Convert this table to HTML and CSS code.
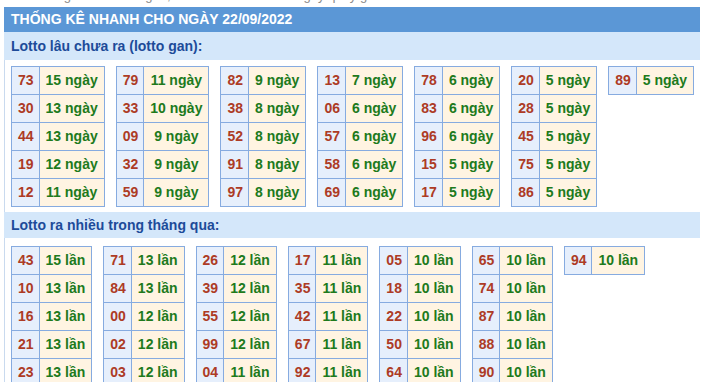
FILE: index.html
```html
<!DOCTYPE html>
<html lang="vi">
<head>
<meta charset="utf-8">
<title>Thống kê nhanh</title>
<link rel="stylesheet" href="styles.css">
</head>
<body>
<div class="topline"><div class="topline-text">Xem thống kê nhanh lô gan, lô ra nhiều nhất theo ngày quay gần nhất</div></div>
<div class="box">
  <div class="head">THỐNG KÊ NHANH CHO NGÀY 22/09/2022</div>
  <div class="body">
    <div class="band">Lotto lâu chưa ra (lotto gan):</div>
    <div class="grid">
      <table class="t"><tr><td class="n">73</td><td class="v">15 ngày</td></tr><tr><td class="n">30</td><td class="v">13 ngày</td></tr><tr><td class="n">44</td><td class="v">13 ngày</td></tr><tr><td class="n">19</td><td class="v">12 ngày</td></tr><tr><td class="n">12</td><td class="v">11 ngày</td></tr></table>
      <table class="t"><tr><td class="n">79</td><td class="v">11 ngày</td></tr><tr><td class="n">33</td><td class="v">10 ngày</td></tr><tr><td class="n">09</td><td class="v">9 ngày</td></tr><tr><td class="n">32</td><td class="v">9 ngày</td></tr><tr><td class="n">59</td><td class="v">9 ngày</td></tr></table>
      <table class="t"><tr><td class="n">82</td><td class="v">9 ngày</td></tr><tr><td class="n">38</td><td class="v">8 ngày</td></tr><tr><td class="n">52</td><td class="v">8 ngày</td></tr><tr><td class="n">91</td><td class="v">8 ngày</td></tr><tr><td class="n">97</td><td class="v">8 ngày</td></tr></table>
      <table class="t"><tr><td class="n">13</td><td class="v">7 ngày</td></tr><tr><td class="n">06</td><td class="v">6 ngày</td></tr><tr><td class="n">57</td><td class="v">6 ngày</td></tr><tr><td class="n">58</td><td class="v">6 ngày</td></tr><tr><td class="n">69</td><td class="v">6 ngày</td></tr></table>
      <table class="t"><tr><td class="n">78</td><td class="v">6 ngày</td></tr><tr><td class="n">83</td><td class="v">6 ngày</td></tr><tr><td class="n">96</td><td class="v">6 ngày</td></tr><tr><td class="n">15</td><td class="v">5 ngày</td></tr><tr><td class="n">17</td><td class="v">5 ngày</td></tr></table>
      <table class="t"><tr><td class="n">20</td><td class="v">5 ngày</td></tr><tr><td class="n">28</td><td class="v">5 ngày</td></tr><tr><td class="n">45</td><td class="v">5 ngày</td></tr><tr><td class="n">75</td><td class="v">5 ngày</td></tr><tr><td class="n">86</td><td class="v">5 ngày</td></tr></table>
      <table class="t"><tr><td class="n">89</td><td class="v">5 ngày</td></tr></table>
    </div>
    <div class="band band2">Lotto ra nhiều trong tháng qua:</div>
    <div class="grid grid2">
      <table class="t"><tr><td class="n">43</td><td class="v">15 lần</td></tr><tr><td class="n">10</td><td class="v">13 lần</td></tr><tr><td class="n">16</td><td class="v">13 lần</td></tr><tr><td class="n">21</td><td class="v">13 lần</td></tr><tr><td class="n">23</td><td class="v">13 lần</td></tr></table>
      <table class="t"><tr><td class="n">71</td><td class="v">13 lần</td></tr><tr><td class="n">84</td><td class="v">13 lần</td></tr><tr><td class="n">00</td><td class="v">12 lần</td></tr><tr><td class="n">02</td><td class="v">12 lần</td></tr><tr><td class="n">03</td><td class="v">12 lần</td></tr></table>
      <table class="t"><tr><td class="n">26</td><td class="v">12 lần</td></tr><tr><td class="n">39</td><td class="v">12 lần</td></tr><tr><td class="n">55</td><td class="v">12 lần</td></tr><tr><td class="n">99</td><td class="v">12 lần</td></tr><tr><td class="n">04</td><td class="v">11 lần</td></tr></table>
      <table class="t"><tr><td class="n">17</td><td class="v">11 lần</td></tr><tr><td class="n">35</td><td class="v">11 lần</td></tr><tr><td class="n">42</td><td class="v">11 lần</td></tr><tr><td class="n">67</td><td class="v">11 lần</td></tr><tr><td class="n">92</td><td class="v">11 lần</td></tr></table>
      <table class="t"><tr><td class="n">05</td><td class="v">10 lần</td></tr><tr><td class="n">18</td><td class="v">10 lần</td></tr><tr><td class="n">22</td><td class="v">10 lần</td></tr><tr><td class="n">50</td><td class="v">10 lần</td></tr><tr><td class="n">64</td><td class="v">10 lần</td></tr></table>
      <table class="t"><tr><td class="n">65</td><td class="v">10 lần</td></tr><tr><td class="n">74</td><td class="v">10 lần</td></tr><tr><td class="n">87</td><td class="v">10 lần</td></tr><tr><td class="n">88</td><td class="v">10 lần</td></tr><tr><td class="n">90</td><td class="v">10 lần</td></tr></table>
      <table class="t"><tr><td class="n">94</td><td class="v">10 lần</td></tr></table>
    </div>
  </div>
</div>
</body>
</html>
```
FILE: styles.css
```css
html, body {
  margin: 0;
  padding: 0;
  background: #ffffff;
  font-family: "Liberation Sans", Arial, sans-serif;
}

.topline {
  height: 4px;
  overflow: hidden;
  margin-left: 8px;
}

.topline-text {
  margin-top: -12px;
  font-size: 13px;
  line-height: 16px;
  color: #8a8a8a;
  white-space: nowrap;
}

.box {
  margin: 3px 0 0 4px;
  width: 696px;
  height: 375px;
  overflow: hidden;
}

.head {
  height: 25px;
  line-height: 25px;
  background: #5b97d6;
  color: #ffffff;
  font-size: 14px;
  font-weight: bold;
  padding-left: 7px;
}

.body {
  border-left: 1px solid #c9daef;
  height: 350px;
}

.band {
  margin-left: -1px;
  height: 28px;
  line-height: 28px;
  background: #d4e7fa;
  color: #1d4b99;
  font-size: 14px;
  font-weight: bold;
  padding-left: 7px;
}

.band2 {
  margin-top: 5px;
  height: 26px;
  line-height: 26px;
}

.grid {
  display: flex;
  align-items: flex-start;
  gap: 11px;
  padding: 6px 0 0 6px;
}

.grid2 {
  padding-top: 8px;
}

.t {
  border-collapse: collapse;
  font-size: 14px;
  font-weight: bold;
}

.t td {
  border: 1px solid #86abe0;
  height: 27px;
  line-height: 27px;
  white-space: nowrap;
  text-align: center;
}

.t td.n {
  background: #e6effc;
  color: #ad3b25;
  padding: 0 5px 0 6px;
}

.t td.v {
  background: #fff4e2;
  color: #207a1c;
  padding: 0 6px;
}
```
